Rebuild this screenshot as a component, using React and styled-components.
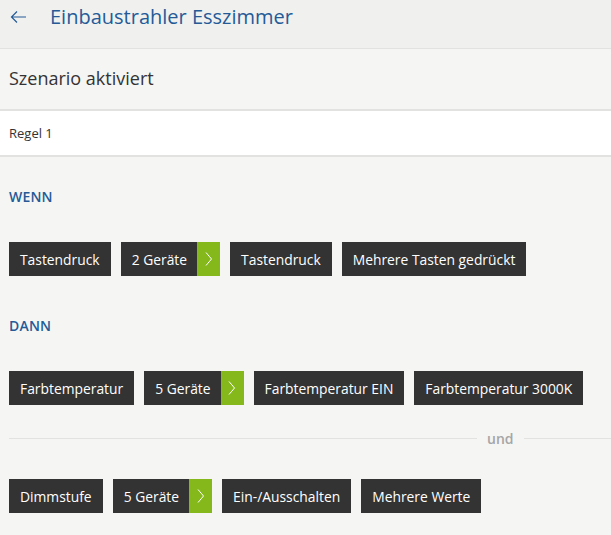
import React from 'react';
import styled, { createGlobalStyle } from 'styled-components';

const Global = createGlobalStyle`
  body {
    margin: 0;
    background: #f5f5f4;
    font-family: 'Open Sans', 'Noto Sans', sans-serif;
  }
`

const Page = styled.div`
  width: 611px;
  min-height: 535px;
  background: #f5f5f4;
  overflow: hidden;
`

const Header = styled.div`
  height: 49px;
  background: #f0f0ef;
  border-bottom: 1px solid #e2e2e1;
  display: flex;
  align-items: center;
  padding-bottom: 15px;
  box-sizing: border-box;
  padding-left: 10px;
`

const Back = styled.button`
  background: none;
  border: none;
  padding: 0;
  width: 17px;
  height: 14px;
  display: flex;
  margin-right: 23px;
  cursor: pointer;
`

const Title = styled.h1`
  margin: 0;
  font-size: 20px;
  font-weight: 400;
  color: #245b97;
  line-height: 28px;
`

const Status = styled.div`
  height: 62px;
  border-bottom: 2px solid #e2e2e1;
  display: flex;
  align-items: center;
  padding-left: 9px;
  font-size: 18px;
  color: #333;
  box-sizing: border-box;
  padding-bottom: 2px;
`

const Rule = styled.div`
  height: 46px;
  background: #fff;
  border-bottom: 2px solid #e2e2e1;
  display: flex;
  align-items: center;
  padding-left: 9px;
  font-size: 13px;
  color: #333;
  box-sizing: border-box;
`

const Content = styled.div`
  padding: 0 0 0 9px;
`

const Label = styled.div`
  font-size: 14px;
  line-height: 20px;
  font-weight: 600;
  color: #245b97;
  margin-top: ${p => p.top}px;
  letter-spacing: 0.2px;
`

const Chips = styled.div`
  display: flex;
  gap: 10px;
  margin-top: ${p => p.top}px;
`

const Chip = styled.div`
  height: 34px;
  background: #333333;
  color: #fff;
  font-size: 13.85px;
  display: flex;
  align-items: center;
  padding-left: 11px;
  padding-right: ${p => (p.more ? 0 : 11)}px;
`

const Arrow = styled.div`
  width: 23px;
  height: 34px;
  background: #84b81b;
  margin-left: 10px;
  display: flex;
  align-items: center;
  justify-content: center;
`

const Divider = styled.div`
  display: flex;
  align-items: center;
  margin-top: 24px;
  height: 18px;
  span {
    color: #a6a6a6;
    font-size: 14px;
    font-weight: 600;
    padding: 0 10px;
  }
  &::before, &::after {
    content: '';
    height: 1px;
    background: #e2e2e1;
    flex: 1;
  }
  &::before { flex: 0 0 468px; }
`

function Chevron() {
  return (
    <svg width="8" height="14" viewBox="0 0 8 14">
      <path d="M1 0.5 L6.5 7 L1 13.5" fill="none" stroke="#fff" strokeWidth="1" />
    </svg>
  );
}

function Button({ text, more }) {
  return (
    <Chip more={more}>
      {text}
      {more && <Arrow><Chevron /></Arrow>}
    </Chip>
  );
}

export default function App() {
  return (
    <Page>
      <Global />
      <Header>
        <Back aria-label="Zurück">
          <svg width="17" height="14" viewBox="0 0 17 14">
            <path d="M16 7 H1.5 M7 1.5 L1.5 7 L7 12.5" fill="none" stroke="#245b97" strokeWidth="1.2" />
          </svg>
        </Back>
        <Title>Einbaustrahler Esszimmer</Title>
      </Header>
      <Status>Szenario aktiviert</Status>
      <Rule>Regel 1</Rule>
      <Content>
        <Label top={30}>WENN</Label>
        <Chips top={35}>
          <Button text="Tastendruck" />
          <Button text="2 Geräte" more />
          <Button text="Tastendruck" />
          <Button text="Mehrere Tasten gedrückt" />
        </Chips>
        <Label top={40}>DANN</Label>
        <Chips top={35}>
          <Button text="Farbtemperatur" />
          <Button text="5 Geräte" more />
          <Button text="Farbtemperatur EIN" />
          <Button text="Farbtemperatur 3000K" />
        </Chips>
        <Divider><span>und</span></Divider>
        <Chips top={32}>
          <Button text="Dimmstufe" />
          <Button text="5 Geräte" more />
          <Button text="Ein-/Ausschalten" />
          <Button text="Mehrere Werte" />
        </Chips>
      </Content>
    </Page>
  );
}
